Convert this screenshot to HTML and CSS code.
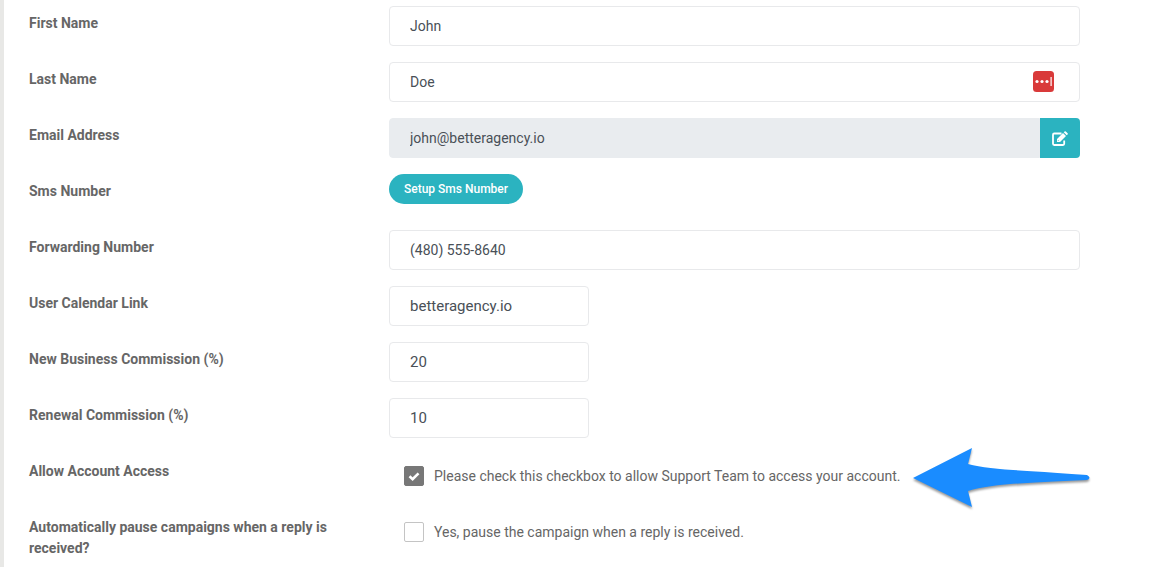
FILE: index.html
```html
<!DOCTYPE html>
<html lang="en">
<head>
	<meta charset="UTF-8">
	<meta name="viewport" content="width=device-width, initial-scale=1">
	<title>Profile</title>
	<link rel="stylesheet" href="styles.css">
</head>
<body>
	<form class="profile">
		<div class="row">
			<label class="label" for="first-name">First Name</label>
			<div class="field">
				<input class="input" type="text" id="first-name" value="John">
			</div>
		</div>
		<div class="row">
			<label class="label" for="last-name">Last Name</label>
			<div class="field">
				<input class="input" type="text" id="last-name" value="Doe">
				<!-- password manager badge -->
				<svg class="badge" viewBox="0 0 21 21" aria-hidden="true">
					<rect width="21" height="21" rx="3.500" fill="#d93a3a"/>
					<circle cx="4" cy="10.500" r="1.600" fill="#fff"/>
					<circle cx="9" cy="10.500" r="1.600" fill="#fff"/>
					<circle cx="14" cy="10.500" r="1.600" fill="#fff"/>
					<rect x="17.500" y="6" width="1.200" height="9" fill="#fff"/>
				</svg>
			</div>
		</div>
		<div class="row">
			<label class="label" for="email">Email Address</label>
			<div class="field">
				<input class="input input-locked" type="text" id="email" value="john@betteragency.io" readonly>
				<button class="btn-edit" type="button" aria-label="Edit email address">
					<svg viewBox="0 0 16 15" width="16" height="15" aria-hidden="true">
						<path d="M9.500 2.500H2.200Q1 2.500 1 3.700V12.800Q1 14 2.200 14H11Q12.200 14 12.200 12.800V9.500" fill="none" stroke="#fff" stroke-width="1.800"/>
						<path d="M5 11V8L11 2L14 5L8 11ZM11.700 1.300L12.600 .4Q13.200 -.1 13.800 .4L15.600 2.200Q16.100 2.800 15.600 3.400L14.700 4.300Z" fill="#fff"/>
						<path d="M6 9.200L6.900 10.100" stroke="#2bb3c0" stroke-width=".8"/>
					</svg>
				</button>
			</div>
		</div>
		<div class="row">
			<span class="label">Sms Number</span>
			<div class="field">
				<button class="btn-setup" type="button">Setup Sms Number</button>
			</div>
		</div>
		<div class="row">
			<label class="label" for="forwarding">Forwarding Number</label>
			<div class="field">
				<input class="input" type="text" id="forwarding" value="(480) 555-8640">
			</div>
		</div>
		<div class="row">
			<label class="label" for="calendar">User Calendar Link</label>
			<div class="field">
				<input class="input input-short" type="text" id="calendar" value="betteragency.io">
			</div>
		</div>
		<div class="row">
			<label class="label" for="new-commission">New Business Commission (%)</label>
			<div class="field">
				<input class="input input-short" type="text" id="new-commission" value="20">
			</div>
		</div>
		<div class="row">
			<label class="label" for="renewal-commission">Renewal Commission (%)</label>
			<div class="field">
				<input class="input input-short" type="text" id="renewal-commission" value="10">
			</div>
		</div>
		<div class="row">
			<span class="label">Allow Account Access</span>
			<div class="field">
				<label class="check">
					<input class="check-box" type="checkbox" checked>
					<svg class="check-mark" viewBox="0 0 12 12" aria-hidden="true">
						<path d="M1.500 6.300L4.600 9.200L10.500 3.300" fill="none" stroke="#fff" stroke-width="2.600"/>
					</svg>
					<span>Please check this checkbox to allow Support Team to access your account.</span>
				</label>
				<svg class="arrow" viewBox="0 0 180 64" aria-hidden="true">
					<path fill="#1a8cff" d="M1 31L60 1L56 17C78 23 110 23 175 28Q180 31 175 33C110 36 78 37 56 44L60 60Z"/>
				</svg>
			</div>
		</div>
		<div class="row">
			<label class="label" for="pause">Automatically pause campaigns when a reply is received?</label>
			<div class="field">
				<label class="check">
					<input class="check-box" type="checkbox" id="pause">
					<span>Yes, pause the campaign when a reply is received.</span>
				</label>
			</div>
		</div>
	</form>
</body>
</html>
```
FILE: styles.css
```css
*{
	box-sizing:border-box;
}
body{
	margin:0;
	padding-left:4px;
	background:#e8e8e6;
	font-family:Roboto, "Liberation Sans", sans-serif;
	font-size:14px;
	line-height:21px;
	color:#666;
}
.profile{
	display:flex;
	flex-direction:column;
	gap:16px;
	min-height:100vh;
	padding:6px 87px 0 25px;
	background:#fff;
}
.row{
	display:grid;
	grid-template-columns:360px 1fr;
	min-height:40px;
}
.label{
	padding:7px 30px 0 0;
	font-weight:bold;
}
.field{
	position:relative;
	display:flex;
	align-items:flex-start;
}
.input{
	flex:1;
	min-width:0;
	height:40px;
	padding:0 20px;
	border:1px solid #e8e9eb;
	border-radius:4px;
	background:#fff;
	font-family:inherit;
	font-size:14px;
	color:#495057;
}
.input-short{
	flex:0 1 200px;
	font-size:15px;
}
.input-locked{
	border-color:#e9ecef;
	border-radius:4px 0 0 4px;
	background:#e9ecef;
}
.badge{
	position:absolute;
	top:9px;
	right:26px;
	width:21px;
	height:21px;
}
.btn-edit{
	display:flex;
	align-items:center;
	justify-content:center;
	width:40px;
	height:40px;
	padding:0;
	border:0;
	border-radius:0 4px 4px 0;
	background:#2bb3c0;
	cursor:pointer;
}
.btn-setup{
	height:30px;
	padding:0 15px;
	border:0;
	border-radius:15px;
	background:#2bb3c0;
	color:#fff;
	font-family:inherit;
	font-size:12px;
	font-weight:500;
	cursor:pointer;
}
.check{
	position:relative;
	display:flex;
	align-items:flex-start;
	gap:10px;
	padding:12px 0 0 15px;
}
.check-box{
	appearance:none;
	width:20px;
	height:20px;
	margin:0;
	border:1px solid #c4c4c4;
	border-radius:2px;
	background:#fff;
}
.check-box:checked{
	border-color:#777;
	background:#777;
}
.check-mark{
	position:absolute;
	left:19px;
	top:16px;
	width:12px;
	height:12px;
}
.arrow{
	position:absolute;
	left:523px;
	top:-7px;
	width:180px;
	height:64px;
	overflow:visible;
	filter:drop-shadow(0 2px 1px rgba(0,0,0,.4));
}
```
